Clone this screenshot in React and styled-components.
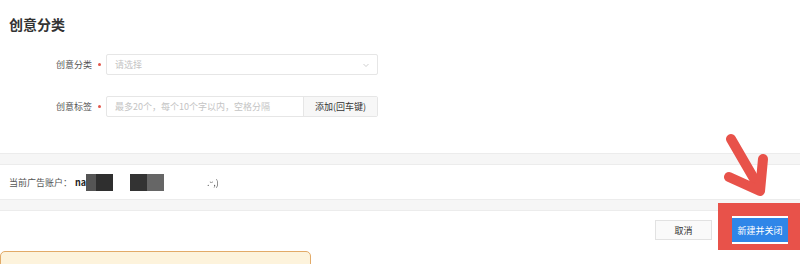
import React from "react";
import styled, { createGlobalStyle } from "styled-components";

const Global = createGlobalStyle`
  html, body { margin: 0; padding: 0; background: #fff; }
  body { font-family: "Noto Sans CJK SC", "Noto Sans", sans-serif; width: 800px; height: 264px; overflow: hidden; }
  * { box-sizing: border-box; }
`;

const Page = styled.div`
  position: relative;
  width: 800px;
  height: 264px;
  display: flex;
  flex-direction: column;
  overflow: hidden;
  & > * { flex-shrink: 0; }
`;

const Title = styled.h2`
  margin: 0;
  padding: 14px 0 0 9px;
  height: 54px;
  font-size: 14px;
  line-height: 20px;
  font-weight: 700;
  color: #333;
`;

const Form = styled.div`
  display: flex;
  flex-direction: column;
  gap: 21px;
  height: 99px;
`;

const Row = styled.div`
  display: flex;
  align-items: center;
  height: 21px;
`;

const Label = styled.span`
  width: 92px;
  text-align: right;
  font-size: 9px;
  color: #555;
`;

const Star = styled.span`
  width: 14px;
  display: flex;
  justify-content: center;
  align-items: center;
  &::before {
    content: "";
    width: 3px;
    height: 3px;
    border-radius: 50%;
    background: #e2574c;
  }
`;

const Field = styled.div`
  width: 272px;
  height: 21px;
  border: 1px solid #e6e6e6;
  border-radius: 2px;
  display: flex;
  align-items: center;
  background: #fff;
`;

const Placeholder = styled.span`
  flex: 1;
  padding-left: 8px;
  font-size: 9px;
  color: #c4c4c4;
  white-space: nowrap;
`;

const Chevron = styled.svg`
  width: 8px;
  height: 8px;
  margin-right: 7px;
`;

const AddButton = styled.span`
  width: 74px;
  height: 100%;
  border-left: 1px solid #e6e6e6;
  background: #f7f7f7;
  display: flex;
  align-items: center;
  justify-content: center;
  font-size: 9px;
  color: #333;
`;

const Band = styled.div`
  height: 12px;
  background: #f6f6f6;
  border-top: 1px solid #ececec;
  border-bottom: 1px solid #ececec;
`;

const Account = styled.div`
  height: 34px;
  display: flex;
  align-items: center;
  padding-left: 9px;
  font-size: 9px;
  color: #555;
`;

const AccountName = styled.span`
  margin-left: 3px;
  font-weight: 700;
  color: #222;
`;

const Redact = styled.span`
  display: inline-block;
  width: ${(p) => p.w}px;
  height: 17px;
  background: ${(p) => p.c};
  margin-left: ${(p) => p.ml || 0}px;
`;

const Tail = styled.span`
  margin-left: 43px;
  color: #666;
  font-size: 9px;
  filter: blur(0.4px);
`;

const Footer = styled.div`
  height: 40px;
  display: flex;
  align-items: center;
  justify-content: flex-end;
  gap: 20px;
  padding: 0 12px 2px 0;
`;

const CancelButton = styled.span`
  width: 57px;
  height: 20px;
  border: 1px solid #e2e2e2;
  background: #fafafa;
  display: flex;
  align-items: center;
  justify-content: center;
  font-size: 9px;
  color: #333;
`;

const PrimaryButton = styled.span`
  position: relative;
  z-index: 2;
  width: 56px;
  height: 28px;
  border-top: 2px solid #fff;
  border-bottom: 2px solid #fff;
  background: #2f86e8;
  display: flex;
  align-items: center;
  justify-content: center;
  font-size: 9px;
  color: #fff;
`;

const Highlight = styled.div`
  position: absolute;
  left: 718px;
  top: 203px;
  width: 82px;
  height: 47px;
  background: #e8524a;
  z-index: 1;
`;

const Arrow = styled.svg`
  position: absolute;
  left: 715px;
  top: 125px;
  width: 60px;
  height: 80px;
  z-index: 3;
`;

const Notice = styled.div`
  width: 311px;
  height: 20px;
  background: #fdf3dc;
  border: 1px solid #e2aa68;
  border-radius: 5px 5px 0 0;
`;

export default function App() {
  return (
    <Page>
      <Global />
      <Title>创意分类</Title>
      <Form>
        <Row>
          <Label>创意分类</Label>
          <Star />
          <Field>
            <Placeholder>请选择</Placeholder>
            <Chevron viewBox="0 0 8 8">
              <path d="M1.5 3 L4 5.5 L6.5 3" fill="none" stroke="#c8c8c8" strokeWidth="0.9" />
            </Chevron>
          </Field>
        </Row>
        <Row>
          <Label>创意标签</Label>
          <Star />
          <Field>
            <Placeholder>最多20个，每个10个字以内，空格分隔</Placeholder>
            <AddButton>添加(回车键)</AddButton>
          </Field>
        </Row>
      </Form>
      <Band />
      <Account>
        当前广告账户：
        <AccountName>na</AccountName>
        <Redact w={10} c="#555" />
        <Redact w={17} c="#2f2f2f" />
        <Redact w={17} c="#333" ml={17} />
        <Redact w={17} c="#666" />
        <Tail>.ᵕ,)</Tail>
      </Account>
      <Band />
      <Footer>
        <CancelButton>取消</CancelButton>
        <PrimaryButton>新建并关闭</PrimaryButton>
      </Footer>
      <Notice />
      <Highlight />
      <Arrow viewBox="0 0 60 80">
        <g fill="none" stroke="#e8524a" strokeWidth="10" strokeLinecap="round" strokeLinejoin="round">
          <path d="M16 14 L45 64" />
          <path d="M14 52 L45 66 L48 34" />
        </g>
      </Arrow>
    </Page>
  );
}
